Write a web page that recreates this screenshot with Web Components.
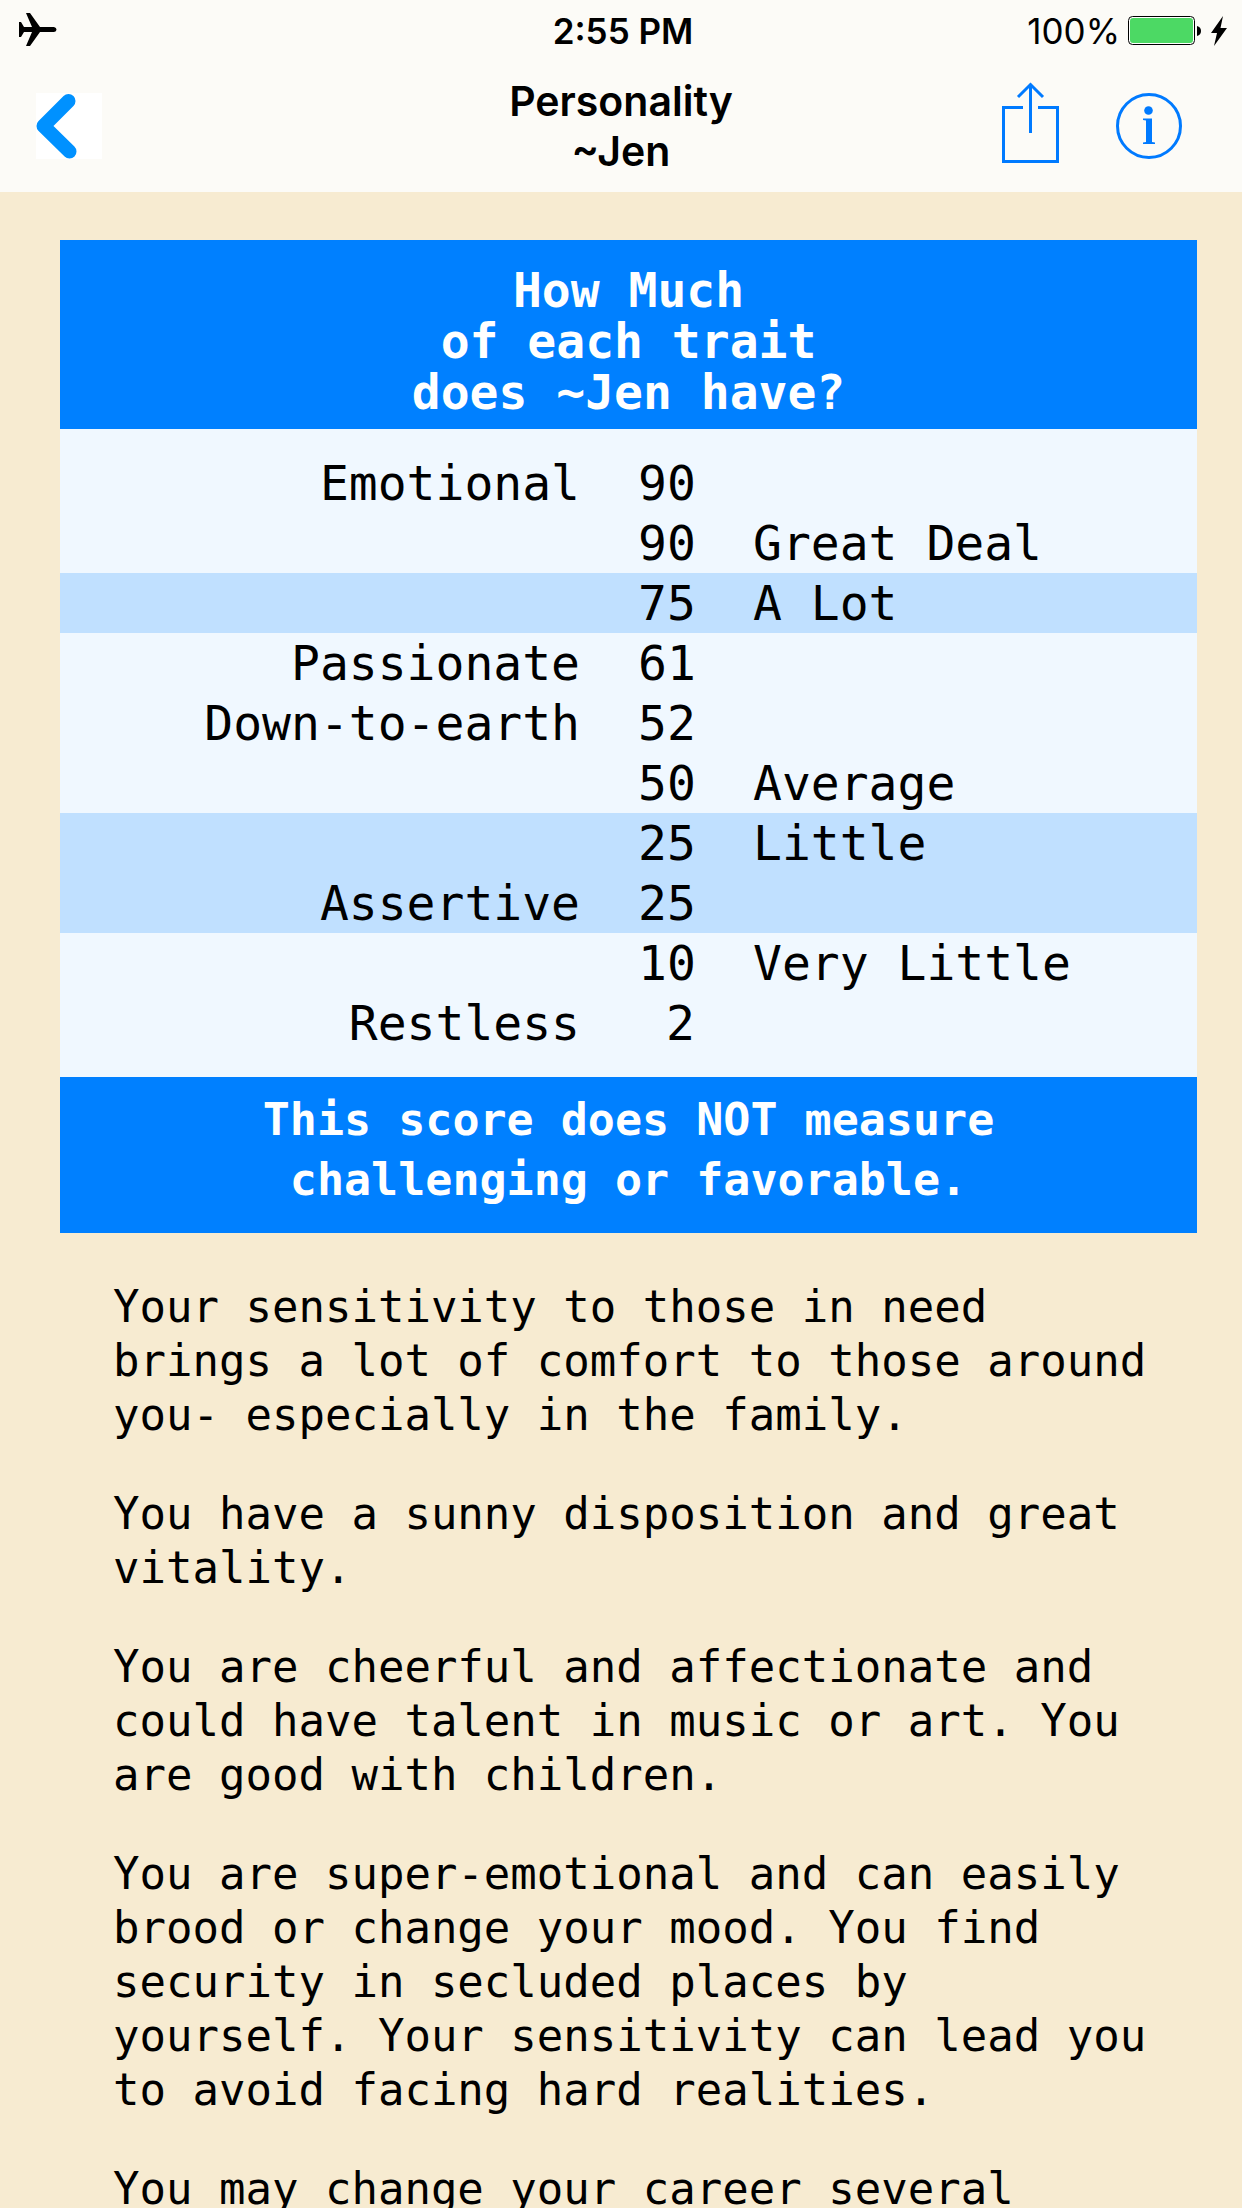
<!DOCTYPE html>
<html lang="en">
<head>
<meta charset="utf-8">
<meta name="viewport" content="width=device-width, initial-scale=1">
<title>Personality</title>
<style>
  body { margin: 0; background: #f7ebd1; color: #000; }
</style>
</head>
<body>
<personality-app></personality-app>

<template id="app-tpl">
  <style>
    :host { display: flex; flex-direction: column; height: 100vh; }
    header { background: #fcfbf7; flex: none; }
    main { flex: 1; min-height: 0; overflow-y: auto; scrollbar-width: none; padding: 48px 45px 0 60px; }
  </style>
  <header>
    <status-bar time="2:55 PM" battery="100%"></status-bar>
    <nav-bar><span>Personality</span><span>~Jen</span></nav-bar>
  </header>
  <main>
    <trait-table>
      <span slot="title">How Much<br>of each trait<br>does ~Jen have?</span>
      <span slot="note">This score does NOT measure<br>challenging or favorable.</span>
    </trait-table>
    <reading-text>
      <p>Your sensitivity to those in need brings a lot of comfort to those around you- especially in the family.</p>
      <p>You have a sunny disposition and great vitality.</p>
      <p>You are cheerful and affectionate and could have talent in music or art. You are good with children.</p>
      <p>You are super-emotional and can easily brood or change your mood. You find security in secluded places by yourself. Your sensitivity can lead you to avoid facing hard realities.</p>
      <p>You may change your career several</p>
    </reading-text>
  </main>
</template>

<template id="status-tpl">
  <style>
    :host { display: grid; grid-template-columns: 1fr auto 1fr; align-items: center; box-sizing: border-box; height: 60px; padding: 2px 15px 0 19px; font: 35px/58px Inter, "Liberation Sans", sans-serif; }
    svg { display: block; }
    .time { font-weight: 600; }
    .right { display: flex; align-items: center; justify-content: flex-end; gap: 10px; }
    .level { margin-right: -2px; }
  </style>
  <svg width="38" height="36" viewBox="0 0 38 36" role="img" aria-label="Airplane mode"><path d="M7 0H11L21 14H35Q37.500 14.500 37.500 16.500T35 19H21L11 33H7L13 19H5L2 24H0V9H2L5 14H13Z"/></svg>
  <span class="time"></span>
  <span class="right">
    <span class="level"></span>
    <svg width="73" height="30" viewBox="0 0 73 30" aria-hidden="true"><rect x=".5" y=".5" width="66" height="28" rx="4" fill="#fff" stroke="#000"/><rect x="2" y="2" width="63" height="25" rx="3" fill="#4cd964"/><path d="M69 10Q73 11 73 15T69 20Z"/></svg>
    <svg width="16" height="30" viewBox="0 0 16 30" aria-hidden="true"><path d="M12 0L0 17H6L3 30L16 12H9.500Z"/></svg>
  </span>
</template>

<template id="nav-tpl">
  <style>
    :host { display: grid; grid-template-columns: 1fr auto 1fr; align-items: center; height: 132px; }
    h1 { margin: 0; display: flex; flex-direction: column; align-items: center; font: 600 41px/50px Inter, "Liberation Sans", sans-serif; }
    button { display: block; border: 0; padding: 0; background: none; cursor: pointer; }
    svg { display: block; }
    .back { background: #fff; margin-left: 36px; justify-self: start; }
    .tools { display: flex; align-items: center; justify-content: flex-end; gap: 57px; padding-right: 60px; }
  </style>
  <button class="back" aria-label="Back"><svg width="66" height="66" viewBox="0 0 66 66"><path d="M32.500 8L7.500 33L33.500 58.500" fill="none" stroke="#0091ff" stroke-width="14" stroke-linecap="round" stroke-linejoin="round"/></svg></button>
  <h1><slot></slot></h1>
  <div class="tools">
    <button aria-label="Share"><svg width="57" height="88" viewBox="0 6 57 88" fill="none" stroke="#007aff" stroke-width="3"><path d="M21 31.500H1.500V85.500H55.500V31.500H36M28.500 57V8M16 21L28.500 8.500L41 21"/></svg></button>
    <button aria-label="Information"><svg width="66" height="66" viewBox="0 0 66 66" fill="#007aff"><circle cx="33" cy="33" r="31.500" fill="none" stroke="#007aff" stroke-width="3"/><circle cx="32.500" cy="17.500" r="4.300"/><path d="M27 25.500H36V49L39 49.500V51H27V49.500L30 49V27.500L27 27Z"/></svg></button>
  </div>
</template>

<template id="table-tpl">
  <style>
    :host { display: block; font: 48px/60px "DejaVu Sans Mono", Menlo, monospace; }
    h2, .note { margin: 0; background: #0080ff; color: #fff; text-align: center; font-weight: 700; }
    h2 { font-size: 48px; line-height: 51px; padding: 25px 0 11px; }
    .note { font-size: 45px; padding: 13px 0 23px; }
    .body { background: #f0f8ff; padding: 24px 0; }
    table { width: 100%; table-layout: fixed; border-collapse: collapse; }
    col.score { width: 115px; }
    col.level { width: 473px; }
    th, td { padding: 0 29px; height: 60px; font-weight: 400; text-align: right; white-space: nowrap; }
    td:last-child { text-align: left; }
    tr.band { background: #c0e0ff; }
  </style>
  <h2><slot name="title"></slot></h2>
  <div class="body"><table><colgroup><col><col class="score"><col class="level"></colgroup><tbody></tbody></table></div>
  <div class="note"><slot name="note"></slot></div>
</template>

<template id="reading-tpl">
  <style>
    :host { display: flex; flex-direction: column; gap: 45px; padding: 47px 38px 0 53px; font: 44px/54px "DejaVu Sans Mono", Menlo, monospace; }
    ::slotted(p) { margin: 0; }
  </style>
  <slot></slot>
</template>

<script>
  const stamp = (host, id) => {
    const root = host.attachShadow({ mode: "open" });
    root.append(document.getElementById(id).content.cloneNode(true));
    return root;
  };

  customElements.define("status-bar", class extends HTMLElement {
    connectedCallback() {
      if (this.shadowRoot) return;
      const root = stamp(this, "status-tpl");
      root.querySelector(".time").textContent = this.getAttribute("time");
      root.querySelector(".level").textContent = this.getAttribute("battery");
    }
  });

  customElements.define("nav-bar", class extends HTMLElement {
    constructor() { super(); stamp(this, "nav-tpl"); }
  });

  // Each row: trait name, score, name of the level, shaded or not.
  const ROWS = [
    ["Emotional", 90, "", false],
    ["", 90, "Great Deal", false],
    ["", 75, "A Lot", true],
    ["Passionate", 61, "", false],
    ["Down-to-earth", 52, "", false],
    ["", 50, "Average", false],
    ["", 25, "Little", true],
    ["Assertive", 25, "", true],
    ["", 10, "Very Little", false],
    ["Restless", 2, "", false]
  ];

  customElements.define("trait-table", class extends HTMLElement {
    constructor() {
      super();
      const body = stamp(this, "table-tpl").querySelector("tbody");
      for (const [trait, score, level, band] of ROWS) {
        const tr = body.insertRow();
        if (band) tr.className = "band";
        for (const value of [trait, score, level]) tr.insertCell().textContent = value;
      }
    }
  });

  customElements.define("reading-text", class extends HTMLElement {
    constructor() { super(); stamp(this, "reading-tpl"); }
  });

  customElements.define("personality-app", class extends HTMLElement {
    constructor() { super(); stamp(this, "app-tpl"); }
  });
</script>
</body>
</html>
